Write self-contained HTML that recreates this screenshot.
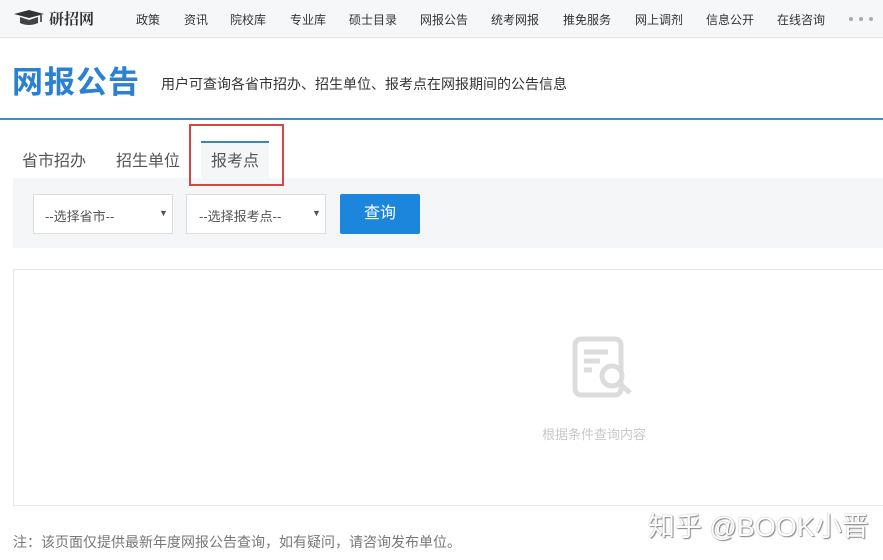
<!DOCTYPE html>
<html><head><meta charset="utf-8"><style>
*{margin:0;padding:0;box-sizing:border-box}
body{width:883px;height:560px;overflow:hidden;background:#fff;font-family:"Liberation Sans","Noto Sans CJK SC",sans-serif;position:relative;color:#333}
.a{position:absolute;white-space:nowrap}
.nav{left:0;top:0;width:883px;height:38px;background:#f6f7f9;border-bottom:1px solid #e3e3e3}
.n{top:11px;font-size:12px;color:#333}
</style></head><body>
<div class="a nav"></div>
<svg class="a" style="left:13px;top:9px" width="32" height="18" viewBox="0 0 32 18"><path d="M1 5 L16 1 L31 5 L16 9Z" fill="#333"/><path d="M7 8 L7 14 Q16 18 25 14 L25 8 L16 11Z" fill="#444"/><path d="M28 6 L28 13" stroke="#333" stroke-width="1.5"/></svg>
<div class="a" style="left:49px;top:8px;font-size:15px;font-weight:bold;color:#333;font-family:'Noto Serif CJK SC',serif">研招网</div>
<div class="a n" style="left:136px">政策</div>
<div class="a n" style="left:184px">资讯</div>
<div class="a n" style="left:230px">院校库</div>
<div class="a n" style="left:290px">专业库</div>
<div class="a n" style="left:349px">硕士目录</div>
<div class="a n" style="left:420px">网报公告</div>
<div class="a n" style="left:491px">统考网报</div>
<div class="a n" style="left:563px">推免服务</div>
<div class="a n" style="left:635px">网上调剂</div>
<div class="a n" style="left:706px">信息公开</div>
<div class="a n" style="left:777px">在线咨询</div>
<div class="a" style="left:849px;top:17px;width:36px;height:4px">
<span class="a" style="left:0;top:0;width:4px;height:4px;border-radius:2px;background:#aaa"></span>
<span class="a" style="left:10px;top:0;width:4px;height:4px;border-radius:2px;background:#aaa"></span>
<span class="a" style="left:20px;top:0;width:4px;height:4px;border-radius:2px;background:#aaa"></span></div>
<div class="a" style="left:12px;top:57px;font-size:31px;font-weight:bold;color:#2a80d2;letter-spacing:1px">网报公告</div>
<div class="a" style="left:161px;top:74px;font-size:14px;color:#333">用户可查询各省市招办、招生单位、报考点在网报期间的公告信息</div>
<div class="a" style="left:0;top:118px;width:883px;height:2px;background:#3b8fc6"></div>
<div class="a" style="left:201px;top:141px;width:68px;height:37px;background:#f5f6f8;border-top:2px solid #3a88b8"></div>
<div class="a" style="left:22px;top:147px;font-size:16px;color:#555">省市招办</div>
<div class="a" style="left:116px;top:147px;font-size:16px;color:#555">招生单位</div>
<div class="a" style="left:211px;top:147px;font-size:16px;color:#555">报考点</div>
<div class="a" style="left:13px;top:178px;width:870px;height:70px;background:#f5f6f8"></div>
<div class="a" style="left:189px;top:124px;width:95px;height:62px;border:2px solid #d94444"></div>
<div class="a" style="left:33px;top:194px;width:140px;height:40px;background:#fff;border:1px solid #ddd"></div>
<div class="a" style="left:45px;top:206px;font-size:13px;color:#555">--选择省市--</div>
<div class="a" style="left:159px;top:208px;font-size:9px;color:#555">▼</div>
<div class="a" style="left:186px;top:194px;width:140px;height:40px;background:#fff;border:1px solid #ddd"></div>
<div class="a" style="left:199px;top:206px;font-size:13px;color:#555">--选择报考点--</div>
<div class="a" style="left:312px;top:208px;font-size:9px;color:#555">▼</div>
<div class="a" style="left:340px;top:194px;width:80px;height:40px;background:#1b86dc;border-radius:2px;color:#fff;font-size:16px;text-align:center;line-height:40px">查询</div>
<div class="a" style="left:13px;top:269px;width:880px;height:237px;border:1px solid #e6e6e6"></div>
<svg class="a" style="left:572px;top:336px" width="62" height="62" viewBox="0 0 62 62"><rect x="3" y="3" width="46" height="56" rx="6" fill="none" stroke="#dcdcdc" stroke-width="5"/><path d="M12 16H36M12 25H28M12 34H20" stroke="#dcdcdc" stroke-width="5"/><circle cx="40" cy="40" r="10" fill="#fff" stroke="#dcdcdc" stroke-width="5"/><path d="M47 47L58 57" stroke="#dcdcdc" stroke-width="5"/></svg>
<div class="a" style="left:542px;top:424px;font-size:13px;color:#c8c8c8">根据条件查询内容</div>
<div class="a" style="left:13px;top:532px;font-size:14px;color:#777">注：该页面仅提供最新年度网报公告查询，如有疑问，请咨询发布单位。</div>
<div class="a" style="left:648px;top:505px;font-size:27px;color:#fff;text-shadow:0 0 1px #777,1px 1px 1px #888">知乎 @BOOK小晋</div>
</body></html>
